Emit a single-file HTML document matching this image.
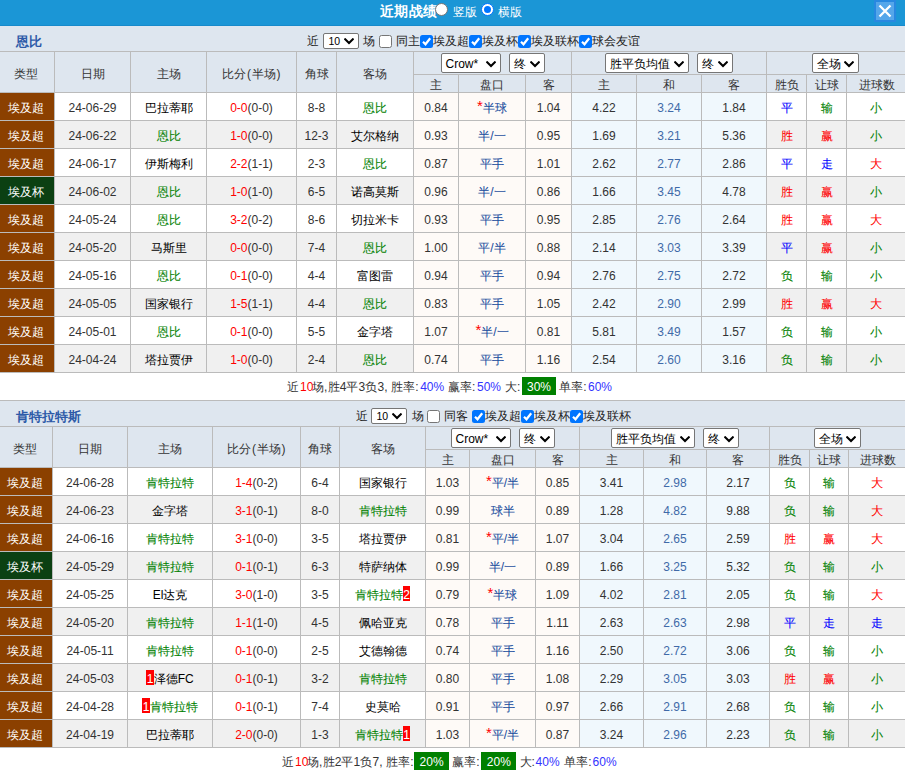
<!DOCTYPE html>
<html><head><meta charset="utf-8"><title>近期战绩</title><style>
*{box-sizing:border-box;margin:0;padding:0}
html,body{width:905px;height:771px;overflow:hidden;background:#fff}
body{font-family:"Liberation Sans",sans-serif;font-size:12px;color:#333;position:relative}
.top{position:absolute;left:0;top:0;width:905px;height:26px;background:#1b96d6;border-bottom:1px solid #1689c8}
.top .ttl{position:absolute;left:379.5px;top:2px;letter-spacing:0.5px;font-size:14px;font-weight:bold;color:#fff;line-height:18px;white-space:nowrap}
.top .t2{position:absolute;top:4px;color:#fff;line-height:16px;white-space:nowrap}
.rd{position:absolute;top:3px;width:13px;height:13px;border-radius:50%;background:#fff;border:1px solid #767676}
.rd.on{border:1px solid #0075ff;}
.rd.on:after{content:"";position:absolute;left:2px;top:2px;width:7px;height:7px;border-radius:50%;background:#0075ff}
.cls{position:absolute;left:874px;top:0;width:22px;height:22px;background:#55a6ea;border:2px solid #2888e0;border-top:2px solid #2888e0}
.sec{position:absolute;left:0;width:906px;height:375px;border-top:1px solid #bbb}
.sec.s0{border-top-color:#178acb}
.tbar{position:relative;height:26px;background:#dee6ef;border-bottom:1px solid #bbb}
.tname{position:absolute;left:16px;top:8px;font-size:13px;font-weight:bold;color:#2d5aa8;line-height:16px}
.ft{position:absolute;top:7px;line-height:16px;white-space:nowrap;color:#222}
.fs{position:absolute;top:7px}
.cb{position:absolute;top:9px;width:13px;height:13px;border:1px solid #767676;border-radius:2.5px;background:#fff}
.cb.on{background:#0075ff;border:none}
.cb svg{display:block}
table{border-collapse:separate;border-spacing:0;table-layout:fixed;width:906px}
th,td{border-right:1px solid #bbb;border-bottom:1px solid #bbb;text-align:center;font-weight:normal;white-space:nowrap;overflow:hidden;padding:0}
th{background:#dee6ef;color:#333}
tr.h1 th{height:23px}
tr.h1 th[rowspan]{height:41px;padding-top:4px}
tr.h2 th{height:18px;line-height:13px;padding-top:4px}
td{height:28px;line-height:23px;padding-top:4px;color:#333}
tr.d td{background:#fff}
tr.e td{background:#f0f0f0}
td.tl,tr.d td.tl,tr.e td.tl{background:#8b4000;color:#fff}
td.tc,tr.d td.tc,tr.e td.tc{background:#0b4012;color:#fff}
td.tl,td.tc,tr.h1 th:first-child{padding-right:3px}
tr.h1 th:last-child{padding-right:2px}
td:last-child{padding-right:2px}
td.tg,td.pk,td.r,td.b,td.g{-webkit-text-stroke:0.08px currentColor}
td.tg{color:#008000}
td.tk{color:#000}
tr.d td.o,tr.e td.o{background:#fefaf7}
tr.d td.x,tr.e td.x{background:#f0f8fd}
td.pk{color:#1e50a0}
td.dr{color:#3f6aa8}
.pp{margin:0 0.5px 0 1px}
.st{color:#f00;font-weight:normal;font-size:15px;line-height:0;position:relative;top:-1.5px;-webkit-text-stroke:0}
.r{color:#f00}.b{color:#00f}.g{color:#008000}
.bl{color:#33f}
.gb{position:absolute;top:4px;background:#008000;color:#fff;height:18px;line-height:16px;padding-top:2px;text-align:center}
.sg{position:absolute;top:6px;line-height:16px;white-space:nowrap}
.ws{letter-spacing:0.1px}
.rc{font-style:normal;background:#f00;color:#fff;font-weight:normal;display:inline-block;width:7.5px;line-height:18px;height:15px;overflow:hidden;padding:0;vertical-align:top;margin-top:2px;text-align:center}
.sum{position:relative;height:27px;color:#333}
.sel{display:inline-block;position:relative;top:0;height:20px;border:1px solid #767676;border-radius:2px;background:#fff;vertical-align:middle;text-align:left;line-height:17px;color:#000;white-space:nowrap}
.sel span{padding-left:4px;position:relative;top:1.5px}
.sel.ml{margin-left:8px}
.sel svg{position:absolute;right:4px;top:6.5px}
.sel.s16{top:0;height:16px;line-height:14px;font-size:10.5px;border-radius:2px}
.sel.s16 span{padding-left:4.5px;top:-0.5px}
.sel.s16 svg{top:4px}
.sc{font-size:12px}
</style></head><body>
<div class="top"><span class="ttl">近期战绩</span><span class="rd" style="left:435px"></span><span class="t2" style="left:453px">竖版</span><span class="rd on" style="left:481px"></span><span class="t2" style="left:498px">横版</span><div class="cls"><svg viewBox="0 0 18 18" width="18" height="18" style="display:block"><path d="M3.5 3.5 L14.5 14.5 M14.5 3.5 L3.5 14.5" stroke="#fff" stroke-width="2.3" fill="none"/></svg></div></div>
<div class="sec s0" style="top:25px">
<div class="tbar"><span class="tname">恩比</span><span class="ft" style="left:307px">近</span><span class="fs" style="left:323px"><span class="sel s16" style="width:36px"><span>10</span><svg viewBox="0 0 10 7" width="10" height="7"><path d="M1.2 1.3 L5 5 L8.8 1.3" fill="none" stroke="#000" stroke-width="2.1" stroke-linecap="square"/></svg></span></span><span class="ft" style="left:363px">场</span><span class="cb" style="left:379px"></span><span class="ft" style="left:396px">同主</span><span class="cb on" style="left:420px"><svg viewBox="0 0 13 13" width="13" height="13"><path d="M3 6.8 L5.5 9.3 L10.2 3.3" fill="none" stroke="#fff" stroke-width="2.2"/></svg></span><span class="ft" style="left:433px">埃及超</span><span class="cb on" style="left:469px"><svg viewBox="0 0 13 13" width="13" height="13"><path d="M3 6.8 L5.5 9.3 L10.2 3.3" fill="none" stroke="#fff" stroke-width="2.2"/></svg></span><span class="ft" style="left:482px">埃及杯</span><span class="cb on" style="left:518px"><svg viewBox="0 0 13 13" width="13" height="13"><path d="M3 6.8 L5.5 9.3 L10.2 3.3" fill="none" stroke="#fff" stroke-width="2.2"/></svg></span><span class="ft" style="left:531px">埃及联杯</span><span class="cb on" style="left:579px"><svg viewBox="0 0 13 13" width="13" height="13"><path d="M3 6.8 L5.5 9.3 L10.2 3.3" fill="none" stroke="#fff" stroke-width="2.2"/></svg></span><span class="ft" style="left:592px">球会友谊</span></div>
<table cellspacing="0" cellpadding="0"><colgroup><col style="width:55px"><col style="width:76px"><col style="width:76px"><col style="width:90px"><col style="width:40px"><col style="width:77px"><col style="width:45px"><col style="width:67px"><col style="width:46px"><col style="width:65px"><col style="width:65px"><col style="width:65px"><col style="width:40px"><col style="width:40px"><col style="width:60px"></colgroup>
<tr class="h1"><th rowspan="2">类型</th><th rowspan="2">日期</th><th rowspan="2">主场</th><th rowspan="2">比分<span class="pp">(</span>半场<span class="pp">)</span></th><th rowspan="2">角球</th><th rowspan="2">客场</th><th colspan="3" class="sc"><span class="sel " style="width:60px"><span>Crow*</span><svg viewBox="0 0 10 7" width="10" height="7"><path d="M1.2 1.3 L5 5 L8.8 1.3" fill="none" stroke="#000" stroke-width="2.1" stroke-linecap="square"/></svg></span><span class="sel ml" style="width:36px"><span>终</span><svg viewBox="0 0 10 7" width="10" height="7"><path d="M1.2 1.3 L5 5 L8.8 1.3" fill="none" stroke="#000" stroke-width="2.1" stroke-linecap="square"/></svg></span></th><th colspan="3" class="sc"><span class="sel " style="width:84px"><span>胜平负均值</span><svg viewBox="0 0 10 7" width="10" height="7"><path d="M1.2 1.3 L5 5 L8.8 1.3" fill="none" stroke="#000" stroke-width="2.1" stroke-linecap="square"/></svg></span><span class="sel ml" style="width:36px"><span>终</span><svg viewBox="0 0 10 7" width="10" height="7"><path d="M1.2 1.3 L5 5 L8.8 1.3" fill="none" stroke="#000" stroke-width="2.1" stroke-linecap="square"/></svg></span></th><th colspan="3" class="sc"><span class="sel " style="width:47px"><span>全场</span><svg viewBox="0 0 10 7" width="10" height="7"><path d="M1.2 1.3 L5 5 L8.8 1.3" fill="none" stroke="#000" stroke-width="2.1" stroke-linecap="square"/></svg></span></th></tr>
<tr class="h2"><th>主</th><th>盘口</th><th>客</th><th>主</th><th>和</th><th>客</th><th>胜负</th><th>让球</th><th>进球数</th></tr>
<tr class="d"><td class="tl">埃及超</td><td>24-06-29</td><td class="tk">巴拉蒂耶</td><td><span class="r">0-0</span>(0-0)</td><td>8-8</td><td class="tg">恩比</td><td class="o">0.84</td><td class="o pk"><b class="st">*</b>半球</td><td class="o">1.04</td><td class="x">4.22</td><td class="x dr">3.24</td><td class="x">1.84</td><td class="b">平</td><td class="g">输</td><td class="g">小</td></tr>
<tr class="e"><td class="tl">埃及超</td><td>24-06-22</td><td class="tg">恩比</td><td><span class="r">1-0</span>(0-0)</td><td>12-3</td><td class="tk">艾尔格纳</td><td class="o">0.93</td><td class="o pk">半/一</td><td class="o">0.95</td><td class="x">1.69</td><td class="x dr">3.21</td><td class="x">5.36</td><td class="r">胜</td><td class="r">赢</td><td class="g">小</td></tr>
<tr class="d"><td class="tl">埃及超</td><td>24-06-17</td><td class="tk">伊斯梅利</td><td><span class="r">2-2</span>(1-1)</td><td>2-3</td><td class="tg">恩比</td><td class="o">0.87</td><td class="o pk">平手</td><td class="o">1.01</td><td class="x">2.62</td><td class="x dr">2.77</td><td class="x">2.86</td><td class="b">平</td><td class="b">走</td><td class="r">大</td></tr>
<tr class="e"><td class="tc">埃及杯</td><td>24-06-02</td><td class="tg">恩比</td><td><span class="r">1-0</span>(1-0)</td><td>6-5</td><td class="tk">诺高莫斯</td><td class="o">0.96</td><td class="o pk">半/一</td><td class="o">0.86</td><td class="x">1.66</td><td class="x dr">3.45</td><td class="x">4.78</td><td class="r">胜</td><td class="r">赢</td><td class="g">小</td></tr>
<tr class="d"><td class="tl">埃及超</td><td>24-05-24</td><td class="tg">恩比</td><td><span class="r">3-2</span>(0-2)</td><td>8-6</td><td class="tk">切拉米卡</td><td class="o">0.93</td><td class="o pk">平手</td><td class="o">0.95</td><td class="x">2.85</td><td class="x dr">2.76</td><td class="x">2.64</td><td class="r">胜</td><td class="r">赢</td><td class="r">大</td></tr>
<tr class="e"><td class="tl">埃及超</td><td>24-05-20</td><td class="tk">马斯里</td><td><span class="r">0-0</span>(0-0)</td><td>7-4</td><td class="tg">恩比</td><td class="o">1.00</td><td class="o pk">平/半</td><td class="o">0.88</td><td class="x">2.14</td><td class="x dr">3.03</td><td class="x">3.39</td><td class="b">平</td><td class="r">赢</td><td class="g">小</td></tr>
<tr class="d"><td class="tl">埃及超</td><td>24-05-16</td><td class="tg">恩比</td><td><span class="r">0-1</span>(0-0)</td><td>4-4</td><td class="tk">富图雷</td><td class="o">0.94</td><td class="o pk">平手</td><td class="o">0.94</td><td class="x">2.76</td><td class="x dr">2.75</td><td class="x">2.72</td><td class="g">负</td><td class="g">输</td><td class="g">小</td></tr>
<tr class="e"><td class="tl">埃及超</td><td>24-05-05</td><td class="tk">国家银行</td><td><span class="r">1-5</span>(1-1)</td><td>4-4</td><td class="tg">恩比</td><td class="o">0.83</td><td class="o pk">平手</td><td class="o">1.05</td><td class="x">2.42</td><td class="x dr">2.90</td><td class="x">2.99</td><td class="r">胜</td><td class="r">赢</td><td class="r">大</td></tr>
<tr class="d"><td class="tl">埃及超</td><td>24-05-01</td><td class="tg">恩比</td><td><span class="r">0-1</span>(0-0)</td><td>5-5</td><td class="tk">金字塔</td><td class="o">1.07</td><td class="o pk"><b class="st">*</b>半/一</td><td class="o">0.81</td><td class="x">5.81</td><td class="x dr">3.49</td><td class="x">1.57</td><td class="g">负</td><td class="g">输</td><td class="g">小</td></tr>
<tr class="e"><td class="tl">埃及超</td><td>24-04-24</td><td class="tk">塔拉贾伊</td><td><span class="r">1-0</span>(0-0)</td><td>2-4</td><td class="tg">恩比</td><td class="o">0.74</td><td class="o pk">平手</td><td class="o">1.16</td><td class="x">2.54</td><td class="x dr">2.60</td><td class="x">3.16</td><td class="g">负</td><td class="g">输</td><td class="g">小</td></tr>
</table>
<div class="sum"><span class="sg " style="left:287.3px">近</span><span class="sg r" style="left:300.0px">10</span><span class="sg ws" style="left:312.0px">场,胜4平3负3, 胜率:</span><span class="sg bl" style="left:420.2px">40%</span><span class="sg " style="left:448.0px">赢率:</span><span class="sg bl" style="left:477.0px">50%</span><span class="sg " style="left:505.0px">大:</span><span class="gb" style="left:522.0px;width:34.0px">30%</span><span class="sg " style="left:559.3px">单率:</span><span class="sg bl" style="left:588.0px">60%</span></div>
</div>
<div class="sec s1" style="top:400px">
<div class="tbar"><span class="tname">肯特拉特斯</span><span class="ft" style="left:356px">近</span><span class="fs" style="left:371px"><span class="sel s16" style="width:36px"><span>10</span><svg viewBox="0 0 10 7" width="10" height="7"><path d="M1.2 1.3 L5 5 L8.8 1.3" fill="none" stroke="#000" stroke-width="2.1" stroke-linecap="square"/></svg></span></span><span class="ft" style="left:412px">场</span><span class="cb" style="left:427px"></span><span class="ft" style="left:444px">同客</span><span class="cb on" style="left:472px"><svg viewBox="0 0 13 13" width="13" height="13"><path d="M3 6.8 L5.5 9.3 L10.2 3.3" fill="none" stroke="#fff" stroke-width="2.2"/></svg></span><span class="ft" style="left:485px">埃及超</span><span class="cb on" style="left:521px"><svg viewBox="0 0 13 13" width="13" height="13"><path d="M3 6.8 L5.5 9.3 L10.2 3.3" fill="none" stroke="#fff" stroke-width="2.2"/></svg></span><span class="ft" style="left:534px">埃及杯</span><span class="cb on" style="left:570px"><svg viewBox="0 0 13 13" width="13" height="13"><path d="M3 6.8 L5.5 9.3 L10.2 3.3" fill="none" stroke="#fff" stroke-width="2.2"/></svg></span><span class="ft" style="left:583px">埃及联杯</span></div>
<table cellspacing="0" cellpadding="0"><colgroup><col style="width:53px"><col style="width:75px"><col style="width:85px"><col style="width:88px"><col style="width:39px"><col style="width:86px"><col style="width:44px"><col style="width:66px"><col style="width:44px"><col style="width:64px"><col style="width:63px"><col style="width:63px"><col style="width:40px"><col style="width:39px"><col style="width:58px"></colgroup>
<tr class="h1"><th rowspan="2">类型</th><th rowspan="2">日期</th><th rowspan="2">主场</th><th rowspan="2">比分<span class="pp">(</span>半场<span class="pp">)</span></th><th rowspan="2">角球</th><th rowspan="2">客场</th><th colspan="3" class="sc"><span class="sel " style="width:60px"><span>Crow*</span><svg viewBox="0 0 10 7" width="10" height="7"><path d="M1.2 1.3 L5 5 L8.8 1.3" fill="none" stroke="#000" stroke-width="2.1" stroke-linecap="square"/></svg></span><span class="sel ml" style="width:36px"><span>终</span><svg viewBox="0 0 10 7" width="10" height="7"><path d="M1.2 1.3 L5 5 L8.8 1.3" fill="none" stroke="#000" stroke-width="2.1" stroke-linecap="square"/></svg></span></th><th colspan="3" class="sc"><span class="sel " style="width:84px"><span>胜平负均值</span><svg viewBox="0 0 10 7" width="10" height="7"><path d="M1.2 1.3 L5 5 L8.8 1.3" fill="none" stroke="#000" stroke-width="2.1" stroke-linecap="square"/></svg></span><span class="sel ml" style="width:36px"><span>终</span><svg viewBox="0 0 10 7" width="10" height="7"><path d="M1.2 1.3 L5 5 L8.8 1.3" fill="none" stroke="#000" stroke-width="2.1" stroke-linecap="square"/></svg></span></th><th colspan="3" class="sc"><span class="sel " style="width:47px"><span>全场</span><svg viewBox="0 0 10 7" width="10" height="7"><path d="M1.2 1.3 L5 5 L8.8 1.3" fill="none" stroke="#000" stroke-width="2.1" stroke-linecap="square"/></svg></span></th></tr>
<tr class="h2"><th>主</th><th>盘口</th><th>客</th><th>主</th><th>和</th><th>客</th><th>胜负</th><th>让球</th><th>进球数</th></tr>
<tr class="d"><td class="tl">埃及超</td><td>24-06-28</td><td class="tg">肯特拉特</td><td><span class="r">1-4</span>(0-2)</td><td>6-4</td><td class="tk">国家银行</td><td class="o">1.03</td><td class="o pk"><b class="st">*</b>平/半</td><td class="o">0.85</td><td class="x">3.41</td><td class="x dr">2.98</td><td class="x">2.17</td><td class="g">负</td><td class="g">输</td><td class="r">大</td></tr>
<tr class="e"><td class="tl">埃及超</td><td>24-06-23</td><td class="tk">金字塔</td><td><span class="r">3-1</span>(0-1)</td><td>8-0</td><td class="tg">肯特拉特</td><td class="o">0.99</td><td class="o pk">球半</td><td class="o">0.89</td><td class="x">1.28</td><td class="x dr">4.82</td><td class="x">9.88</td><td class="g">负</td><td class="g">输</td><td class="r">大</td></tr>
<tr class="d"><td class="tl">埃及超</td><td>24-06-16</td><td class="tg">肯特拉特</td><td><span class="r">3-1</span>(0-0)</td><td>3-5</td><td class="tk">塔拉贾伊</td><td class="o">0.81</td><td class="o pk"><b class="st">*</b>平/半</td><td class="o">1.07</td><td class="x">3.04</td><td class="x dr">2.65</td><td class="x">2.59</td><td class="r">胜</td><td class="r">赢</td><td class="r">大</td></tr>
<tr class="e"><td class="tc">埃及杯</td><td>24-05-29</td><td class="tg">肯特拉特</td><td><span class="r">0-1</span>(0-1)</td><td>6-3</td><td class="tk">特萨纳体</td><td class="o">0.99</td><td class="o pk">半/一</td><td class="o">0.89</td><td class="x">1.66</td><td class="x dr">3.25</td><td class="x">5.32</td><td class="g">负</td><td class="g">输</td><td class="g">小</td></tr>
<tr class="d"><td class="tl">埃及超</td><td>24-05-25</td><td class="tk">El达克</td><td><span class="r">3-0</span>(1-0)</td><td>3-5</td><td class="tg">肯特拉特<i class="rc">2</i></td><td class="o">0.79</td><td class="o pk"><b class="st">*</b>半球</td><td class="o">1.09</td><td class="x">4.02</td><td class="x dr">2.81</td><td class="x">2.05</td><td class="g">负</td><td class="g">输</td><td class="r">大</td></tr>
<tr class="e"><td class="tl">埃及超</td><td>24-05-20</td><td class="tg">肯特拉特</td><td><span class="r">1-1</span>(1-0)</td><td>4-5</td><td class="tk">佩哈亚克</td><td class="o">0.78</td><td class="o pk">平手</td><td class="o">1.11</td><td class="x">2.63</td><td class="x dr">2.63</td><td class="x">2.98</td><td class="b">平</td><td class="b">走</td><td class="b">走</td></tr>
<tr class="d"><td class="tl">埃及超</td><td>24-05-11</td><td class="tg">肯特拉特</td><td><span class="r">0-1</span>(0-0)</td><td>2-5</td><td class="tk">艾德翰德</td><td class="o">0.74</td><td class="o pk">平手</td><td class="o">1.16</td><td class="x">2.50</td><td class="x dr">2.72</td><td class="x">3.06</td><td class="g">负</td><td class="g">输</td><td class="g">小</td></tr>
<tr class="e"><td class="tl">埃及超</td><td>24-05-03</td><td class="tk"><i class="rc">1</i>泽德FC</td><td><span class="r">0-1</span>(0-1)</td><td>3-2</td><td class="tg">肯特拉特</td><td class="o">0.80</td><td class="o pk">平手</td><td class="o">1.08</td><td class="x">2.29</td><td class="x dr">3.05</td><td class="x">3.03</td><td class="r">胜</td><td class="r">赢</td><td class="g">小</td></tr>
<tr class="d"><td class="tl">埃及超</td><td>24-04-28</td><td class="tg"><i class="rc">1</i>肯特拉特</td><td><span class="r">0-1</span>(0-1)</td><td>7-4</td><td class="tk">史莫哈</td><td class="o">0.91</td><td class="o pk">平手</td><td class="o">0.97</td><td class="x">2.66</td><td class="x dr">2.91</td><td class="x">2.68</td><td class="g">负</td><td class="g">输</td><td class="g">小</td></tr>
<tr class="e"><td class="tl">埃及超</td><td>24-04-19</td><td class="tk">巴拉蒂耶</td><td><span class="r">2-0</span>(0-0)</td><td>1-3</td><td class="tg">肯特拉特<i class="rc">1</i></td><td class="o">1.03</td><td class="o pk"><b class="st">*</b>平/半</td><td class="o">0.87</td><td class="x">3.24</td><td class="x dr">2.96</td><td class="x">2.23</td><td class="g">负</td><td class="g">输</td><td class="g">小</td></tr>
</table>
<div class="sum"><span class="sg " style="left:282.3px">近</span><span class="sg r" style="left:295.0px">10</span><span class="sg ws" style="left:307.0px">场,胜2平1负7, 胜率:</span><span class="gb" style="left:414.3px;width:34.5px">20%</span><span class="sg " style="left:452.2px">赢率:</span><span class="gb" style="left:481.3px;width:35.0px">20%</span><span class="sg " style="left:519.6px">大:</span><span class="sg bl" style="left:535.6px">40%</span><span class="sg " style="left:564.2px">单率:</span><span class="sg bl" style="left:592.6px">60%</span></div>
</div>
</body></html>
